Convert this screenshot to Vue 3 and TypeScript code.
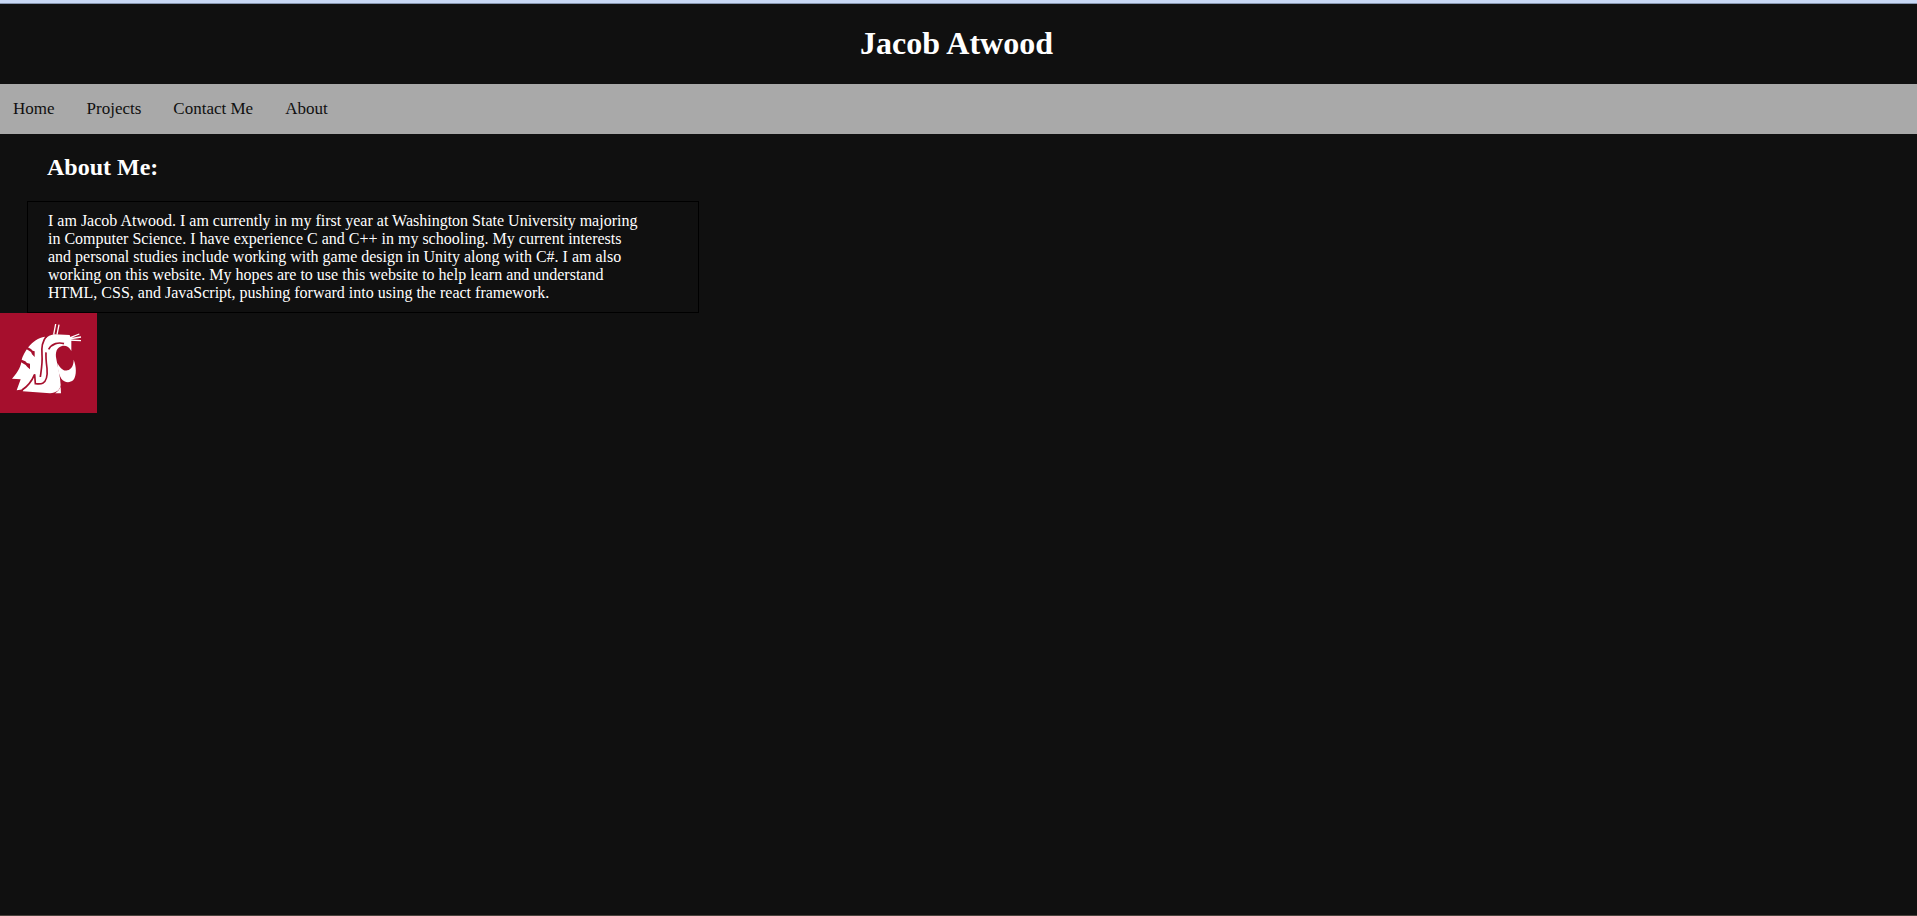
<script setup lang="ts">
interface NavItem {
  label: string
  href: string
}

const navItems: NavItem[] = [
  { label: 'Home', href: '#home' },
  { label: 'Projects', href: '#projects' },
  { label: 'Contact Me', href: '#contact' },
  { label: 'About', href: '#about' },
]
</script>

<template>
  <div class="page">
    <header class="banner">
      <h1 class="title">Jacob Atwood</h1>
    </header>
    <nav class="nav" aria-label="Main">
      <a v-for="item in navItems" :key="item.label" class="nav-link" :href="item.href">{{ item.label }}</a>
    </nav>
    <main class="content">
      <h2 class="heading">About Me:</h2>
      <p class="bio">
        I am Jacob Atwood. I am currently in my first year at Washington State University majoring
        in Computer Science. I have experience C and C++ in my schooling. My current interests
        and personal studies include working with game design in Unity along with C#. I am also
        working on this website. My hopes are to use this website to help learn and understand
        HTML, CSS, and JavaScript, pushing forward into using the react framework.
      </p>
      <svg class="logo" viewBox="0 0 291 300" role="img" aria-label="Washington State Cougars">
        <rect width="291" height="300" fill="#a60f2d" />
        <g fill="#fff">
          <path d="M135 71 C115 74 98 86 86 101 C76 114 68 128 64 143 C64 158 56 174 36 197 L62 199 L50 232 L71 229 L68 235 L150 241 C168 240 181 231 182 216 C181 190 173 162 169 138 C165 118 170 104 186 99 C198 97 208 102 214 114 L214 82 L209 66 L162 64 C151 66 143 70 138 76Z" />
          <path d="M172 150 C182 166 189 175 202 172 C215 169 221 156 221 140 C229 159 231 187 220 201 C209 211 193 209 184 197 C176 185 173 168 172 150Z" />
          <path d="M182 221 L183 241 L165 241 C173 236 178 230 182 221Z" />
        </g>
        <g fill="#a60f2d">
          <path d="M82 102 L93 108 L98 113 L104 115 L104 132 L96 124 L93 117 L79 108Z" />
          <path d="M61 139 L76 145 L81 150 L90 152 L90 169 L82 162 L77 156 L62 147Z" />
        </g>
        <g fill="none" stroke="#a60f2d" stroke-width="5">
          <path d="M139 70 C127 84 124 104 126 126 C128 148 124 170 121 192" />
          <path d="M138 118 C137 136 139 150 141 166 C143 188 140 204 128 211 C121 214 114 213 106 212 L104 184 C96 203 83 220 66 231" />
          <path d="M146 109 C156 91 176 87 192 92" />
        </g>
        <path d="M161 65 L167 33 M171 65 L177 35 M205 76 L238 63 M206 78 L243 72 M206 81 L243 83" fill="none" stroke="#fff" stroke-width="4" />
      </svg>
    </main>
  </div>
</template>

<style>
body {
  margin: 0;
  background: #101010;
}
</style>

<style scoped>
.page {
  box-sizing: border-box;
  min-height: 100vh;
  border-top: 3px solid #c9d9f5;
  border-bottom: 1px solid #4b423d;
  background: #101010;
  color: #fff;
  font-family: "Liberation Serif", "Times New Roman", serif;
  font-size: 16px;
}

.banner {
  box-sizing: border-box;
  display: flex;
  align-items: center;
  justify-content: center;
  height: 81px;
  padding: 0 4px 2px 0;
  border-top: 1px solid #8796b0;
}

.title {
  margin: 0;
  font-size: 32px;
  line-height: 36px;
}

.nav {
  display: flex;
  align-items: center;
  gap: 32px;
  height: 50px;
  padding: 0 13px;
  background: #a9a9a9;
}

.nav-link {
  color: #101010;
  font-size: 17px;
  line-height: 20px;
  text-decoration: none;
}

.heading {
  margin: 20px 47px;
  font-size: 24px;
  line-height: 27px;
}

.bio {
  box-sizing: border-box;
  max-width: 672px;
  margin: 0 27px;
  padding: 10px 50px 10px 20px;
  border: 1px solid #000;
  line-height: 18px;
}

.logo {
  display: block;
  width: 97px;
  height: 100px;
}
</style>
